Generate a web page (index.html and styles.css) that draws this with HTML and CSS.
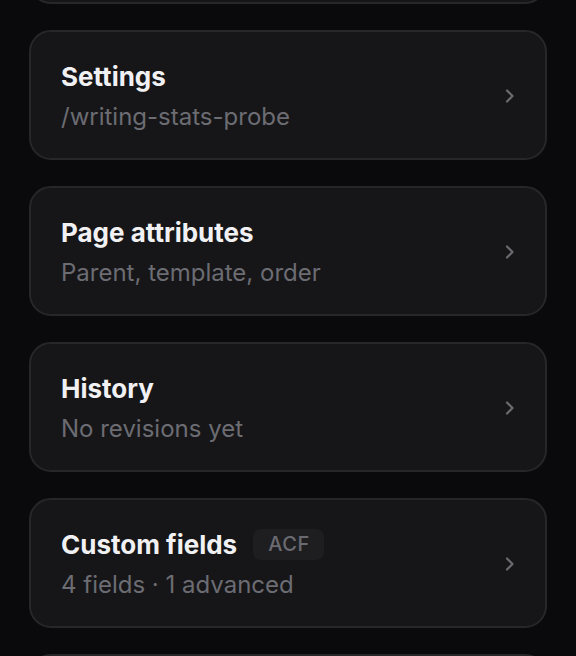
FILE: index.html
```html
<!DOCTYPE html>
<html lang="en">
<head>
  <meta charset="UTF-8">
  <meta name="viewport" content="width=device-width, initial-scale=1.0">
  <title>Post panels</title>
  <link rel="stylesheet" href="styles.css">
</head>
<body>
  <div class="panels">
    <div class="card card-cut"></div>

    <div class="card">
      <div class="text">
        <div class="title">Settings</div>
        <div class="sub">/writing-stats-probe</div>
      </div>
      <svg class="chev" viewBox="0 0 10 14"><path d="M2 1.5 L7.5 7 L2 12.5"/></svg>
    </div>

    <div class="card">
      <div class="text">
        <div class="title">Page attributes</div>
        <div class="sub">Parent, template, order</div>
      </div>
      <svg class="chev" viewBox="0 0 10 14"><path d="M2 1.5 L7.5 7 L2 12.5"/></svg>
    </div>

    <div class="card">
      <div class="text">
        <div class="title">History</div>
        <div class="sub">No revisions yet</div>
      </div>
      <svg class="chev" viewBox="0 0 10 14"><path d="M2 1.5 L7.5 7 L2 12.5"/></svg>
    </div>

    <div class="card">
      <div class="text">
        <div class="title">Custom fields <span class="badge">ACF</span></div>
        <div class="sub">4 fields · 1 advanced</div>
      </div>
      <svg class="chev" viewBox="0 0 10 14"><path d="M2 1.5 L7.5 7 L2 12.5"/></svg>
    </div>

    <div class="card"></div>
  </div>
</body>
</html>
```

FILE: styles.css
```css
html, body {
  margin: 0;
  padding: 0;
  background: #0a0a0c;
  overflow: hidden;
}
body {
  font-family: Inter, "Noto Sans", sans-serif;
  height: 656px;
}
.panels {
  display: flex;
  flex-direction: column;
  gap: 26px;
  padding: 0 29px;
  margin-top: -126px;
}
.card {
  box-sizing: border-box;
  height: 130px;
  flex: 0 0 130px;
  background: #161618;
  border: 2px solid #27272a;
  border-radius: 22px;
  display: flex;
  align-items: center;
  justify-content: space-between;
  padding: 0 30px 0 30px;
}
.text {
  display: flex;
  flex-direction: column;
  gap: 9px;
  padding-top: 2px;
}
.title {
  display: flex;
  align-items: center;
  gap: 16px;
  color: #f1f1f3;
  font-size: 26px;
  font-weight: 700;
  line-height: 32px;
}
.sub {
  color: #6c6c73;
  font-size: 24px;
  line-height: 30px;
}
.badge {
  background: #1e1e21;
  color: #6a6a71;
  font-size: 20px;
  font-weight: 500;
  letter-spacing: 0.6px;
  line-height: 31px;
  padding: 0 14px 0 15px;
  border-radius: 8px;
}
.chev {
  width: 10px;
  height: 14px;
  margin-top: 2px;
  fill: none;
  stroke: #6b6b71;
  stroke-width: 2.2;
  stroke-linecap: round;
  stroke-linejoin: round;
}
```
